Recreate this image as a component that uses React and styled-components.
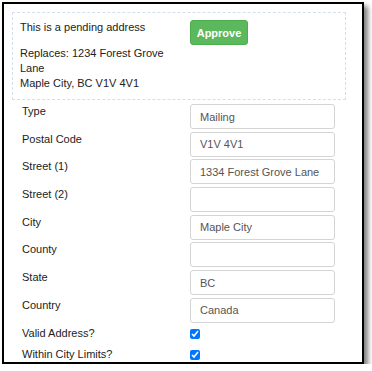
import React from "react";
import styled, { createGlobalStyle } from "styled-components";

const GlobalStyle = createGlobalStyle`
  html, body {
    margin: 0;
    padding: 0;
    background: #fff;
  }
  body {
    font-family: "Liberation Sans", Arial, sans-serif;
    font-size: 11px;
    color: #222;
  }
`;

const Frame = styled.div`
  box-sizing: border-box;
  width: 362px;
  height: 362px;
  margin: 2px 0 0 2px;
  border: 2px solid #000;
  box-shadow: 4px 4px 5px rgba(0, 0, 0, 0.5);
  background: #fff;
  padding: 8px 0 0 8px;
`;

const PendingBox = styled.div`
  box-sizing: border-box;
  width: 334px;
  border: 1px dashed #d6dfe9;
  padding: 7px 0 8px 7px;
  display: grid;
  grid-template-columns: 170px auto;
  align-items: start;
`;

const PendingText = styled.div`
  line-height: 15px;
  color: #222;
`;

const Para = styled.p`
  margin: 0 0 ${(p) => p.$gap || 0}px;
`;

const ApproveButton = styled.button`
  box-sizing: border-box;
  width: 58px;
  height: 25px;
  background: #5cb85c;
  border: 1px solid #4cae4c;
  border-radius: 3px;
  color: #fff;
  font-family: "Liberation Sans", Arial, sans-serif;
  font-weight: bold;
  font-size: 11px;
  padding: 0;
  cursor: pointer;
`;

const Form = styled.div`
  padding: 4px 0 0 10px;
`;

const Row = styled.div`
  display: grid;
  grid-template-columns: 168px 145px;
  height: ${(p) => (p.$check ? "21px" : "27.7px")};
  align-items: start;
`;

const Label = styled.label`
  line-height: 15px;
  color: #222;
`;

const Field = styled.input`
  box-sizing: border-box;
  width: 145px;
  height: 25px;
  margin: 0;
  border: 1px solid #d4d4d4;
  border-radius: 3px;
  padding: 0 9px;
  font-family: "Liberation Sans", Arial, sans-serif;
  font-size: 11px;
  color: #555;
  background: #fff;
  outline: none;
`;

const Check = styled.input`
  width: 10px;
  height: 10px;
  margin: 3px 0 0;
  accent-color: #0075ff;
`;

const fields = [
  ["Type", "Mailing"],
  ["Postal Code", "V1V 4V1"],
  ["Street (1)", "1334 Forest Grove Lane"],
  ["Street (2)", ""],
  ["City", "Maple City"],
  ["County", ""],
  ["State", "BC"],
  ["Country", "Canada"],
];

export default function App() {
  return (
    <>
      <GlobalStyle />
      <Frame>
        <PendingBox>
          <PendingText>
            <Para $gap={11}>This is a pending address</Para>
            <Para>
              Replaces: 1234 Forest Grove Lane
              <br />
              Maple City, BC V1V 4V1
            </Para>
          </PendingText>
          <ApproveButton>Approve</ApproveButton>
        </PendingBox>
        <Form>
          {fields.map(([label, value]) => (
            <Row key={label}>
              <Label>{label}</Label>
              <Field defaultValue={value} />
            </Row>
          ))}
          <Row $check>
            <Label>Valid Address?</Label>
            <Check type="checkbox" defaultChecked />
          </Row>
          <Row $check>
            <Label>Within City Limits?</Label>
            <Check type="checkbox" defaultChecked />
          </Row>
        </Form>
      </Frame>
    </>
  );
}
